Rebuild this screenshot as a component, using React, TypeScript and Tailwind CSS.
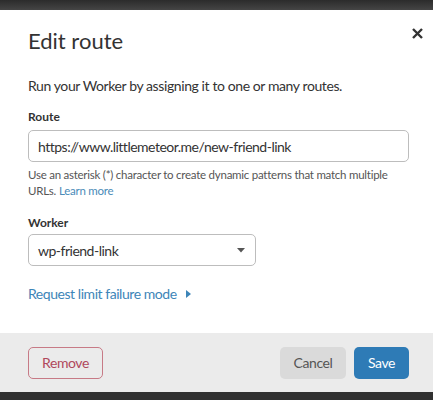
import React from "react";

export default function App() {
  const font = { fontFamily: 'Lato, "Open Sans", sans-serif' };
  return (
    <div className="w-[433px] h-[400px] flex flex-col bg-[#2f2f2f] overflow-hidden" style={font}>
      <div className="h-[10px] bg-gradient-to-b from-[#2b2b2b] to-[#454545]" />
      <div className="flex flex-col bg-white">
        <div className="flex items-start justify-between pl-[28px] pr-[10px] pt-[13px]">
          <h1 className="text-[22px] leading-[36px] text-[#333] font-normal">Edit route</h1>
          <svg width="11" height="11" viewBox="0 0 11 11" className="mt-[5px]">
            <path d="M1 1 L10 10 M10 1 L1 10" stroke="#333" strokeWidth="2.4" strokeLinecap="butt" />
          </svg>
        </div>
        <p className="pl-[28px] mt-[17px] text-[14px] leading-[20px] tracking-[-0.4px] text-[#333]">
          Run your Worker by assigning it to one or many routes.
        </p>
        <div className="pl-[28px] pr-[24px] mt-[13px]">
          <div className="text-[12px] font-bold text-[#333] leading-[16px]">Route</div>
          <div className="mt-[5px] h-[32px] w-[381px] border border-[#bdbdbd] rounded-[5px] flex items-center pl-[9px] text-[14px] tracking-[-0.5px] text-[#333]">
            https://www.littlemeteor.me/new-friend-link
          </div>
          <div className="mt-[5px] flex flex-col text-[11.5px] leading-[16px] tracking-[-0.25px] text-[#555]">
            <span>Use an asterisk (*) character to create dynamic patterns that match multiple</span>
            <div className="flex gap-[3px]">
              <span>URLs.</span>
              <span className="text-[#4a8bb8]">Learn more</span>
            </div>
          </div>
          <div className="mt-[16px] text-[12px] font-bold text-[#333] leading-[16px]">Worker</div>
          <div className="mt-[3px] h-[32px] w-[228px] border border-[#bdbdbd] rounded-[5px] flex items-center justify-between pl-[9px] pr-[10px] text-[14px] tracking-[-0.5px] text-[#333]">
            <span>wp-friend-link</span>
            <svg width="8" height="5" viewBox="0 0 8 5">
              <path d="M0 0 L8 0 L4 4.5 Z" fill="#555" />
            </svg>
          </div>
          <div className="mt-[18px] flex items-center gap-[9px] text-[14px] tracking-[-0.45px] text-[#3d85b8] leading-[20px]">
            <span>Request limit failure mode</span>
            <svg width="5" height="8" viewBox="0 0 5 8">
              <path d="M0 0 L5 4 L0 8 Z" fill="#3d85b8" />
            </svg>
          </div>
        </div>
        <div className="h-[29px]" />
      </div>
      <div className="h-[59px] bg-[#ebebeb] flex items-center justify-between pl-[28px] pr-[24px]">
        <button className="h-[32px] w-[75px] border border-[#c77a86] rounded-[5px] text-[14px] tracking-[-0.4px] text-[#b0485c] bg-transparent">
          Remove
        </button>
        <div className="flex gap-[8px]">
          <button className="h-[32px] w-[66px] rounded-[5px] bg-[#dadada] text-[14px] tracking-[-0.4px] text-[#555]">Cancel</button>
          <button className="h-[32px] w-[55px] rounded-[5px] bg-[#2e7bb6] text-[14px] tracking-[-0.4px] text-white">Save</button>
        </div>
      </div>
      <div className="flex-1 bg-[#303030]" />
    </div>
  );
}
